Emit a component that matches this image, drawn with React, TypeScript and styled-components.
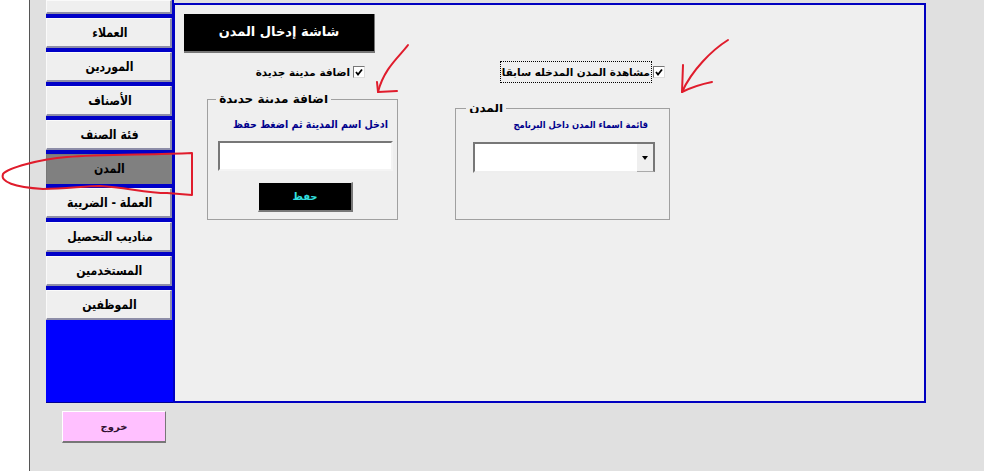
import React from "react";
import styled, { createGlobalStyle } from "styled-components";

const Global = createGlobalStyle`
  html, body { margin: 0; padding: 0; background: #fff; }
  body { font-family: "DejaVu Sans", "Liberation Sans", sans-serif; }
  #root { width: 984px; height: 471px; overflow: hidden; }
`;

const Page = styled.div`
  position: relative;
  width: 984px;
  height: 471px;
  display: flex;
  overflow: hidden;
`;
const Gutter = styled.div`
  width: 29px;
  background: #fff;
  border-right: 1px solid #555;
`;
const Desk = styled.main`
  flex: 1;
  background: #e0e0e0;
  padding: 0 0 0 16px;
  display: flex;
  flex-direction: column;
`;
const Workspace = styled.div`
  display: flex;
  width: 880px;
  height: 404px;
  align-items: stretch;
`;
const Sidebar = styled.nav`
  width: 128px;
  background: #0000ff;
  display: flex;
  flex-direction: column;
  gap: 4px;
  height: 403px;
  margin-right: -1px;
  border-bottom: 1px solid #000090;
  box-sizing: border-box;
`;
const MenuButton = styled.button<{ $active?: boolean; $stub?: boolean }>`
  width: 126px;
  height: ${(p) => (p.$stub ? 14 : 30)}px;
  flex: none;
  padding: 0 0 0 2px;
  border: 0;
  border-top: 1px solid ${(p) => (p.$active ? "#777" : "#fafafa")};
  border-left: 1px solid ${(p) => (p.$active ? "#777" : "#fafafa")};
  border-right: 2px solid ${(p) => (p.$active ? "#808080" : "#8d8da8")};
  border-bottom: 2px solid ${(p) => (p.$active ? "#808080" : "#8d8da8")};
  background: ${(p) => (p.$active ? "#808080" : "#efefef")};
  color: #000;
  font: 700 13px "DejaVu Sans", sans-serif;
  direction: rtl;
  line-height: 26px;
  text-align: center;
  white-space: nowrap;
  &:not(:last-child) {
    box-shadow: 0 4px 0 #0000c8, 2px 4px 0 #0000c8, 2px 0 0 #0000c8;
  }
`;
const MenuLabel = styled.span`
  display: inline-block;
  transform: scaleX(0.84);
`;
const Panel = styled.section`
  position: relative;
  width: 753px;
  height: 400px;
  margin-top: 3px;
  box-sizing: border-box;
  background: #efefef;
  border: 2px solid #0000c0;
  padding: 9px 0 0 9px;
  display: flex;
  flex-direction: column;
`;
const TitleBar = styled.h1`
  margin: 0;
  width: 191px;
  height: 39px;
  box-sizing: border-box;
  background: #000;
  color: #fff;
  font: 700 13px "DejaVu Sans", sans-serif;
  direction: rtl;
  text-align: center;
  line-height: 36px;
  border-right: 1px solid #777;
  border-bottom: 2px solid #777;
`;
const Columns = styled.div`
  display: grid;
  grid-template-columns: 191px 215px;
  column-gap: 57px;
  margin: 11px 0 0 23px;
  height: 160px;
`;
const Column = styled.div`
  display: flex;
  flex-direction: column;
  justify-content: flex-end;
  position: relative;
  height: 156px;
`;
const CheckRow = styled.label<{ $right: number }>`
  position: absolute;
  top: -2px;
  right: ${(p) => p.$right}px;
  display: flex;
  align-items: center;
  gap: 2px;
  font: 700 10.4px/14px "DejaVu Sans", sans-serif;
  color: #000;
  white-space: nowrap;
`;
const CheckLabel = styled.span<{ $focus?: boolean }>`
  direction: rtl;
  padding: 3px 1px;
  outline: ${(p) => (p.$focus ? "1px dotted #000" : "none")};
`;
const CheckBox = styled.span`
  width: 10px;
  height: 10px;
  background: #fff;
  border: 1px solid;
  border-color: #777 #ddd #ddd #777;
  display: block;
  svg { display: block; }
`;
const Group = styled.fieldset<{ $height: number }>`
  position: relative;
  margin: 0;
  padding: 0;
  height: ${(p) => p.$height}px;
  box-sizing: border-box;
  border: 1px solid #a0a0a0;
  display: flex;
  flex-direction: column;
  min-width: 0;
`;
const GroupLegend = styled.div<{ $right: number; $size: number }>`
  position: absolute;
  top: -5px;
  right: ${(p) => p.$right}px;
  height: 9px;
  overflow: hidden;
  background: #efefef;
  padding: 0 3px;
  font: 700 ${(p) => p.$size}px/9px "DejaVu Sans", sans-serif;
  direction: rtl;
  color: #000;
`;
const Hint = styled.p<{ $pr: number; $mt: number; $mb: number; $size: number; $squeeze: number }>`
  margin: ${(p) => p.$mt}px ${(p) => p.$pr}px ${(p) => p.$mb}px 0;
  color: #00008c;
  font: 700 ${(p) => p.$size}px/14px "DejaVu Sans", sans-serif;
  direction: rtl;
  text-align: right;
  white-space: nowrap;
  transform: scaleX(${(p) => p.$squeeze});
  transform-origin: right center;
`;
const TextField = styled.div`
  width: 175px;
  height: 30px;
  margin: 0 0 0 10px;
  box-sizing: border-box;
  background: #fff;
  border: 2px solid;
  border-color: #777 #f4f4f4 #f4f4f4 #777;
`;
const SaveButton = styled.button`
  width: 95px;
  height: 30px;
  margin: 11px 0 0 50px;
  padding: 0;
  box-sizing: border-box;
  background: #000;
  color: #33e0e0;
  font: 700 10px "DejaVu Sans", sans-serif;
  direction: rtl;
  border: 0;
  border-top: 1px solid #eee;
  border-left: 1px solid #eee;
  border-right: 2px solid #777;
  border-bottom: 2px solid #777;
`;
const Combo = styled.div`
  width: 182px;
  height: 31px;
  margin: 0 0 0 17px;
  box-sizing: border-box;
  background: #fff;
  border: 2px solid;
  border-color: #777 #777 #eee #777;
  border-right: 0;
  display: flex;
  justify-content: flex-end;
`;
const ComboArrow = styled.div`
  width: 16px;
  height: 27px;
  background: #efefef;
  border-right: 2px solid #777;
  border-bottom: 1px solid #aaa;
  display: flex;
  align-items: center;
  justify-content: center;
  &::after {
    content: "";
    border: 3.5px solid transparent;
    border-top: 4px solid #000;
    border-bottom: 0;
  }
`;
const ExitButton = styled.button`
  width: 104px;
  height: 32px;
  margin: 7px 0 0 16px;
  padding: 0;
  box-sizing: border-box;
  background: #ffc0ff;
  color: #301030;
  font: 700 10px "DejaVu Sans", sans-serif;
  direction: rtl;
  border: 0;
  border-top: 1px solid #fff;
  border-left: 1px solid #fff;
  border-right: 1px solid #777;
  border-bottom: 2px solid #777;
`;
const Ink = styled.svg`
  position: absolute;
  left: 0;
  top: 0;
  width: 984px;
  height: 471px;
  pointer-events: none;
  fill: none;
  stroke: #e01c2c;
  stroke-width: 2;
  stroke-linejoin: round;
  stroke-linecap: round;
`;

const items = ["العملاء", "الموردين", "الأصناف", "فئة الصنف", "المدن", "العملة - الضريبة", "مناديب التحصيل", "المستخدمين", "الموظفين"];

const Tick = () => (
  <svg width="10" height="10" viewBox="0 0 10 10">
    <path d="M2 5 L4 7.5 L8 2.5" fill="none" stroke="#000" strokeWidth="1.8" />
  </svg>
);

export default function App() {
  return (
    <Page>
      <Global />
      <Gutter />
      <Desk>
        <Workspace>
          <Sidebar>
            <MenuButton $stub aria-label="more" />
            {items.map((t) => (
              <MenuButton key={t} $active={t === "المدن"}>
                <MenuLabel>{t}</MenuLabel>
              </MenuButton>
            ))}
          </Sidebar>
          <Panel>
            <TitleBar>شاشة إدخال المدن</TitleBar>
            <Columns>
              <Column>
                <CheckRow $right={33}>
                  <CheckLabel>اضافة مدينة جديدة</CheckLabel>
                  <CheckBox><Tick /></CheckBox>
                </CheckRow>
                <Group $height={121}>
                  <GroupLegend $right={66} $size={12}>اضافة مدينة جديدة</GroupLegend>
                  <Hint $pr={9} $mt={18} $mb={9} $size={11} $squeeze={0.865}>ادخل اسم المدينة ثم اضغط حفظ</Hint>
                  <TextField />
                  <SaveButton>حفظ</SaveButton>
                </Group>
              </Column>
              <Column>
                <CheckRow $right={5}>
                  <CheckLabel $focus>مشاهدة المدن المدخله سابقا</CheckLabel>
                  <CheckBox><Tick /></CheckBox>
                </CheckRow>
                <Group $height={112}>
                  <GroupLegend $right={163} $size={12}>المدن</GroupLegend>
                  <Hint $pr={21} $mt={9} $mb={10} $size={9.5} $squeeze={0.88}>قائمة اسماء المدن داخل البرنامج</Hint>
                  <Combo><ComboArrow /></Combo>
                </Group>
              </Column>
            </Columns>
          </Panel>
        </Workspace>
        <ExitButton>خروج</ExitButton>
      </Desk>
      <Ink viewBox="0 0 984 471">
        <path d="M408 45 C400 56 384 68 378 92 L397 91" />
        <path d="M378 92 L377 82" />
        <path d="M728 40 C712 50 692 70 682 92 C690 88 702 84 712 82" />
        <path d="M682 92 L683 65" />
        <path d="M192 153 C150 155 100 154 67 157 C40 159 8 168 3 174 C0 182 14 187 43 189 C65 189 85 186 100 186 C125 187 145 193 167 193 L192 195 L192 153" />
      </Ink>
    </Page>
  );
}
